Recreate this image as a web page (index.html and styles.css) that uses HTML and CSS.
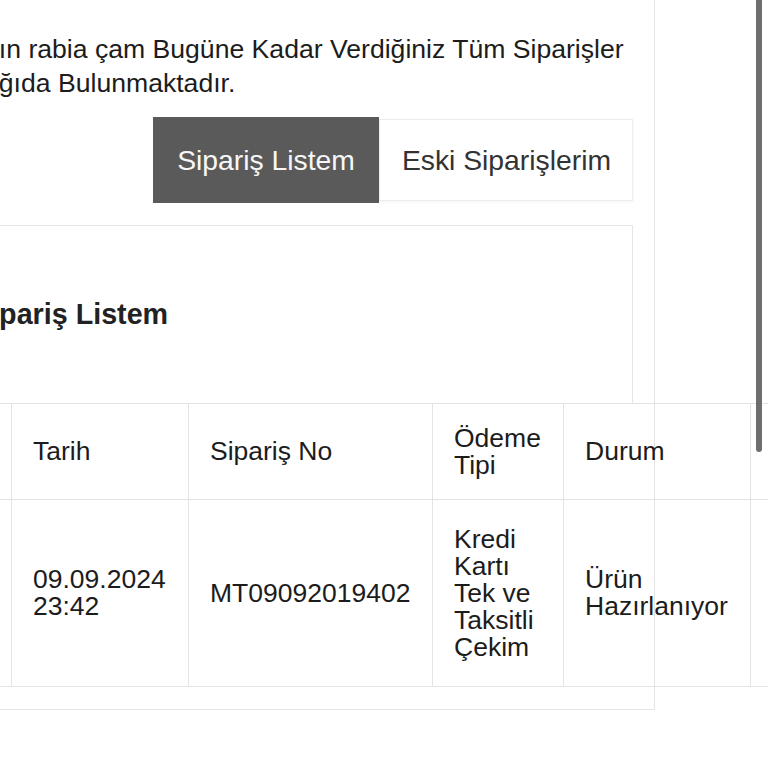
FILE: index.html
```html
<!DOCTYPE html>
<html lang="tr">
<head>
<meta charset="utf-8">
<title>Sipariş Listem</title>
<link rel="stylesheet" href="styles.css">
</head>
<body>
<div class="viewport">
  <div class="account">
    <p class="intro">Sayın rabia çam Bugüne Kadar Verdiğiniz Tüm Siparişler Aşağıda Bulunmaktadır.</p>
    <div class="tabs">
      <a class="tab tab-active">Sipariş Listem</a>
      <a class="tab">Eski Siparişlerim</a>
    </div>
    <div class="panel">
      <h2 class="panel-title">Sipariş Listem</h2>
    </div>
    <table class="orders">
      <colgroup>
        <col class="c-first">
        <col class="c-date">
        <col class="c-no">
        <col class="c-pay">
        <col class="c-status">
        <col class="c-last">
      </colgroup>
      <thead>
        <tr>
          <th></th>
          <th>Tarih</th>
          <th>Sipariş No</th>
          <th>Ödeme Tipi</th>
          <th>Durum</th>
          <th></th>
        </tr>
      </thead>
      <tbody>
        <tr>
          <td></td>
          <td>09.09.2024<br>23:42</td>
          <td>MT09092019402</td>
          <td>Kredi Kartı Tek ve Taksitli Çekim</td>
          <td>Ürün Hazırlanıyor</td>
          <td></td>
        </tr>
      </tbody>
    </table>
  </div>
  <div class="scrollbar"></div>
</div>
</body>
</html>
```

FILE: styles.css
```css
html, body {
  margin: 0;
  padding: 0;
  background: #ffffff;
  overflow: hidden;
}

body {
  font-family: "Liberation Sans", Arial, Helvetica, sans-serif;
  color: #1c1c1c;
  font-size: 26.5px;
}

.viewport {
  position: relative;
  width: 768px;
  height: 768px;
  overflow: hidden;
}

.account {
  width: 677px;
  margin-left: -66px;
  padding: 32px 21px 22px 22px;
  border-right: 1px solid #e4e4e4;
  border-bottom: 1px solid #e4e4e4;
}

.intro {
  margin: 0 0 0 -3px;
  font-size: 26.6px;
  line-height: 34px;
}

.tabs {
  display: flex;
  justify-content: flex-end;
  align-items: center;
  margin-top: 17px;
}

.tab {
  font-size: 28.3px;
  color: #333333;
  text-decoration: none;
}

.tab-active {
  height: 86px;
  line-height: 86px;
  background: #5a5a5a;
  color: #f7f7f7;
  padding: 0 24px 0 24px;
}

.tab:not(.tab-active) {
  height: 80px;
  line-height: 80px;
  border: 1px solid #ededed;
  box-shadow: 0 1px 3px rgba(0, 0, 0, 0.05);
  padding: 0 21px 0 22px;
}

.panel {
  margin-top: 22px;
  height: 177px;
  border: 1px solid #e4e4e4;
  border-bottom: none;
  padding: 0 15px;
  display: flex;
  align-items: center;
}

.panel-title {
  margin: 0;
  font-size: 28.7px;
  font-weight: bold;
  color: #222222;
}

.orders {
  border-collapse: collapse;
  table-layout: fixed;
  width: 994px;
}

.c-first { width: 55px; }
.c-date { width: 177px; }
.c-no { width: 244px; }
.c-pay { width: 131px; }
.c-status { width: 187px; }
.c-last { width: 200px; }

.orders th,
.orders td {
  border: 1px solid #e3e3e3;
  text-align: left;
  vertical-align: middle;
  font-weight: normal;
  line-height: 27px;
  padding: 0 22px 0 21px;
}

.orders th {
  height: 95px;
}

.orders td {
  height: 186px;
}

.scrollbar {
  position: absolute;
  left: 756px;
  top: -4px;
  width: 6px;
  height: 456px;
  border-radius: 3px;
  background: #6e6e6e;
}
```
